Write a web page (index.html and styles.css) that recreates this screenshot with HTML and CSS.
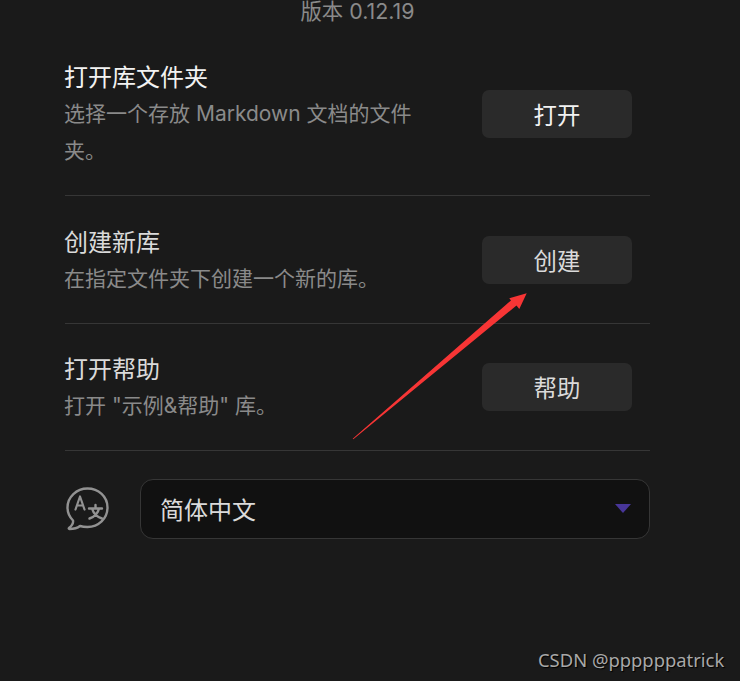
FILE: index.html
```html
<!DOCTYPE html>
<html lang="zh-CN">
<head>
<meta charset="utf-8">
<title>Obsidian</title>
<link rel="stylesheet" href="styles.css">
</head>
<body>
<main class="panel">
  <div class="version">版本 0.12.19</div>
  <section class="row">
    <div class="info">
      <div class="title title-strong">打开库文件夹</div>
      <div class="desc">选择一个存放 Markdown 文档的文件夹。</div>
    </div>
    <button class="btn btn-strong">打开</button>
  </section>
  <section class="row">
    <div class="info">
      <div class="title">创建新库</div>
      <div class="desc">在指定文件夹下创建一个新的库。</div>
    </div>
    <button class="btn">创建</button>
  </section>
  <section class="row row-compact">
    <div class="info">
      <div class="title">打开帮助</div>
      <div class="desc">打开 "示例&amp;帮助" 库。</div>
    </div>
    <button class="btn">帮助</button>
  </section>
  <div class="lang">
    <svg class="lang-icon" viewBox="0 0 44 44" fill="none" stroke="#929292" stroke-linecap="round" stroke-linejoin="round">
      <path stroke-width="2.4" d="M22.5 1.5C11.5 1.5 2.5 10 2.5 20.5c0 5 2 9.5 5.5 13 .5 2.5-1.500 5.5-4 7.500-.5.5 0 1 .5 1 4 0 8-1 10.500-3 2.500.8 5 1 7.500 1 11 0 20-8.500 20-19.500S33.500 1.500 22.500 1.500z"/>
      <path stroke-width="2.2" d="M10.500 22.500L15 9.500L19.500 22.500M12 18.500H18"/>
      <path stroke-width="2.4" d="M24 21.500H37M30.500 18V21.500M34 21.500C33 26 29 30 24.500 31.500M27 21.500C28.500 26.500 32 30 37 31.500"/>
    </svg>
    <div class="select">
      <span>简体中文</span>
      <span class="caret"></span>
    </div>
  </div>
</main>
<svg class="arrow" viewBox="0 0 740 681">
  <polygon points="352.700,438.800 511,300.500 509.300,298.300 526.700,293.300 519.300,309 516.500,305.500 353.300,439.300" fill="#f73535"/>
</svg>
<div class="mark">CSDN @ppppppatrick</div>
</body>
</html>
```
FILE: styles.css
```css
html, body {
  margin: 0;
  height: 100%;
  background: #1a1a1a;
  overflow: hidden;
}
body {
  position: relative;
  font-family: Inter, "Noto Sans CJK SC", sans-serif;
}
.panel {
  width: 585px;
  margin-left: 65px;
}
.version {
  height: 22px;
  line-height: 22px;
  margin-bottom: 9px;
  text-align: center;
  font-size: 21.400px;
  color: #8a8a8a;
}
.row {
  display: flex;
  align-items: center;
  justify-content: space-between;
  padding: 27px 18px 26px 0;
  border-bottom: 1px solid #363636;
}
.row-compact {
  padding-top: 26px;
}
.info {
  width: 350px;
  margin-left: -1px;
}
.title {
  font-size: 24px;
  line-height: 40px;
  margin-bottom: -3px;
  color: #dadada;
}
.title-strong {
  color: #f2f2f2;
}
.desc {
  font-size: 21px;
  line-height: 37px;
  color: #8a8a8a;
}
.btn {
  width: 150px;
  height: 48px;
  padding: 0;
  border: 0;
  border-radius: 7px;
  background: #2a2a2a;
  color: #dadada;
  font: inherit;
  font-size: 23.400px;
}
.btn-strong {
  color: #f2f2f2;
}
.lang {
  display: flex;
  align-items: center;
  gap: 31px;
  padding-top: 28px;
}
.lang-icon {
  width: 44px;
  height: 44px;
  flex: none;
}
.select {
  flex: 1;
  height: 60px;
  box-sizing: border-box;
  display: flex;
  align-items: center;
  justify-content: space-between;
  padding: 0 18px 2px 19px;
  border: 1px solid #363636;
  border-radius: 13px;
  background: #111111;
  color: #dadada;
  font-size: 24px;
}
.caret {
  width: 0;
  height: 0;
  border-left: 8px solid transparent;
  border-right: 8px solid transparent;
  border-top: 9px solid #483699;
}
.arrow {
  position: absolute;
  left: 0;
  top: 0;
  width: 740px;
  height: 681px;
  pointer-events: none;
}
.mark {
  position: absolute;
  left: 538px;
  top: 648px;
  font-family: "Noto Sans", sans-serif;
  font-size: 18.400px;
  line-height: 24px;
  white-space: nowrap;
  color: #a8a8a8;
  text-shadow: 1px 1px 1px #000;
}
```
